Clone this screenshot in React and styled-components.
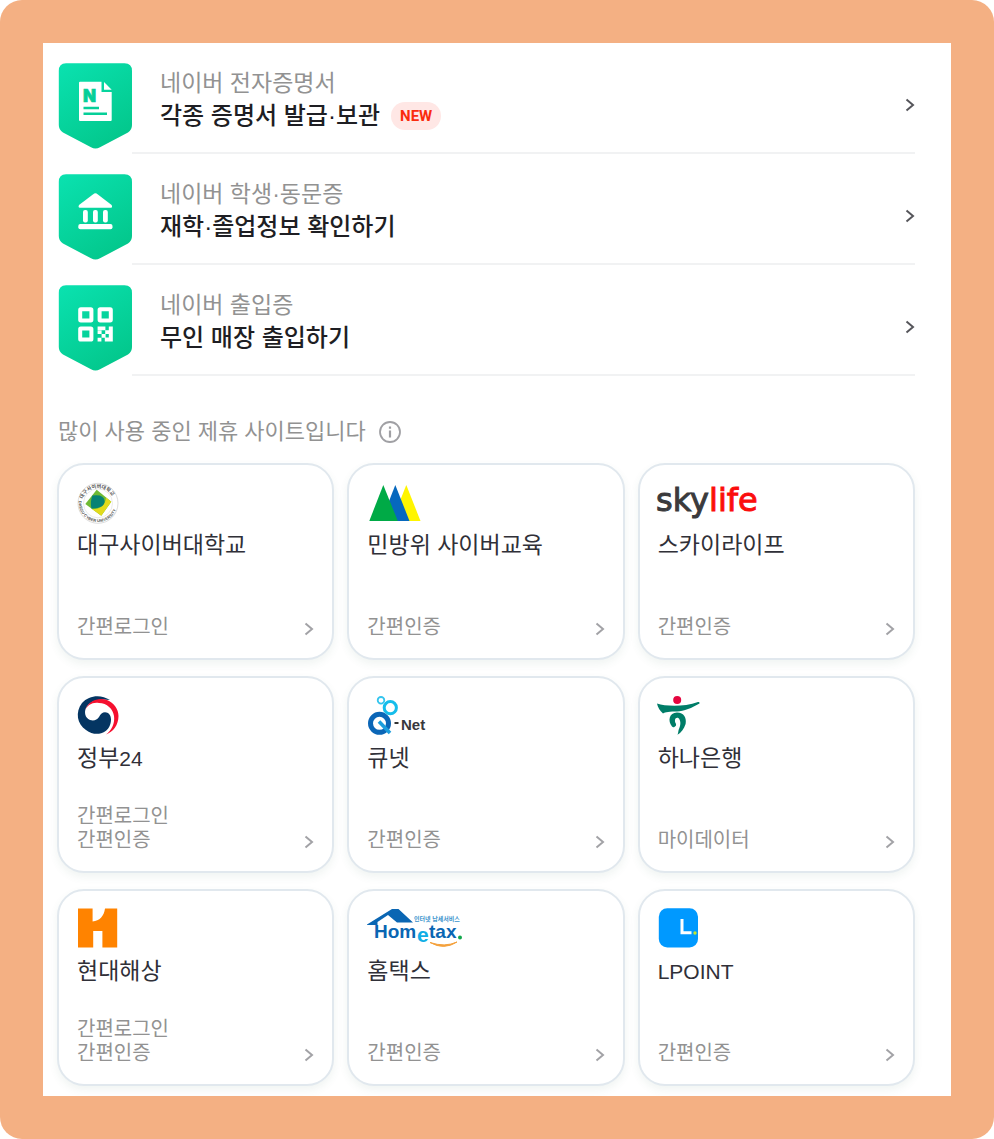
import styled, { createGlobalStyle } from "styled-components";

const GlobalStyle = createGlobalStyle`
  * {
    box-sizing: border-box;
  }

  body {
    margin: 0;
    background-color: #ffffff;
    font-family: "Liberation Sans", "Noto Sans CJK KR", sans-serif;
  }
`;

const Frame = styled.div`
  padding: 43px;
  border-radius: 22px;
  background-color: #f4b083;
`;

const Panel = styled.main`
  padding: 0 36px 10px 14px;
  background-color: white;
`;

const List = styled.ul`
  margin: 0;
  padding: 0;
  list-style: none;
`;

const ServiceLink = styled.a`
  display: flex;
  height: 111px;
  color: inherit;
  text-decoration: none;
`;

const Shield = styled.svg`
  flex: none;
  width: 75px;
  height: 87px;
  margin-top: 20px;
`;

const ServiceBody = styled.div`
  flex: 1;
  display: flex;
  justify-content: space-between;
  padding: 23px 0 0 28px;
  border-bottom: 2px solid #f1f2f3;
`;

const ServiceLabel = styled.div`
  font-size: 23px;
  line-height: 34px;
  color: #929292;
`;

const ServiceTitle = styled.div`
  display: flex;
  align-items: center;
  gap: 11px;
  font-size: 24px;
  line-height: 32px;
  font-weight: 500;
  color: #1e1e23;
`;

const NewBadge = styled.span`
  padding: 0 9px;
  border-radius: 14px;
  background-color: #ffe7e5;
  font-family: Roboto, sans-serif;
  font-size: 15px;
  line-height: 28px;
  font-weight: 700;
  color: #fa2c0e;
`;

const Arrow = styled.svg`
  flex: none;
  width: 10px;
  height: 14px;
  fill: none;
  stroke: ${(props) => props.color};
  stroke-width: 2;
`;

const ServiceArrow = styled(Arrow)`
  margin-top: 32px;
`;

const SectionHead = styled.div`
  display: flex;
  align-items: center;
  gap: 13px;
  padding: 39px 0 14px 1px;
`;

const SectionTitle = styled.h2`
  margin: 0;
  font-size: 22px;
  line-height: 34px;
  font-weight: 400;
  color: #929292;
`;

const InfoButton = styled.button`
  display: flex;
  padding: 0;
  border: none;
  background: none;
`;

const Grid = styled.ul`
  display: grid;
  grid-template-columns: repeat(3, 1fr);
  gap: 16px 13px;
  margin: 0;
  padding: 0;
  list-style: none;
`;

const Card = styled.a`
  display: flex;
  flex-direction: column;
  height: 197px;
  padding: 18px 18px 19px;
  border: 2px solid #e1e8ee;
  border-radius: 27px;
  background-color: white;
  box-shadow: 0 4px 8px rgba(60, 110, 90, 0.08);
  color: inherit;
  text-decoration: none;
`;

const Logo = styled.svg`
  display: block;
  width: 110px;
  height: 40px;
  overflow: visible;
`;

const SiteName = styled.strong`
  margin-top: 6px;
  font-size: 23px;
  line-height: 32px;
  font-weight: 400;
  color: #303038;
`;

const Latin = styled.span`
  font-size: 21px;
`;

const CardBottom = styled.div`
  display: flex;
  align-items: flex-end;
  justify-content: space-between;
  margin-top: auto;
`;

const Methods = styled.div`
  font-size: 20px;
  line-height: 24px;
  color: #929292;
`;

const CardArrow = styled(Arrow)`
  margin-bottom: 3px;
`;

const DocumentGlyph = () => (
  <>
    <path d="M23 18.7H44.5V29H54.7V57Q54.7 58 53.7 58H23Q22 58 22 57V19.7Q22 18.7 23 18.7Z" fill="white" />
    <path d="M47 19L54.7 26.8H47Z" fill="white" />
    <text
      x="26"
      y="39"
      fontFamily="Inter, sans-serif"
      fontSize="17"
      fontWeight="900"
      fill="#05cf98"
      stroke="#05cf98"
      strokeWidth="0.6"
    >
      N
    </text>
    <path d="M26.5 45H42M26.5 50.7H50" stroke="#05cf98" strokeWidth="2.4" />
  </>
);

const SchoolGlyph = () => (
  <g fill="white">
    <path d="M37.2 19.6Q38.4 18.8 39.6 19.6L54.6 31Q55.8 33.7 54 33.7H22.8Q20.8 33.7 22 31Z" />
    <rect x="26" y="36" width="4.8" height="12.4" rx="2" />
    <rect x="36" y="36" width="4.8" height="12.4" rx="2" />
    <rect x="46" y="36" width="4.8" height="12.4" rx="2" />
    <rect x="21.3" y="50" width="34.2" height="5.2" rx="2" />
  </g>
);

const QrGlyph = () => (
  <>
    <g fill="none" stroke="white" strokeWidth="4">
      <rect x="23.2" y="24.2" width="11.2" height="11.2" rx="0.6" />
      <rect x="42.6" y="24.2" width="11.2" height="11.2" rx="0.6" />
      <rect x="23.2" y="43.4" width="11.2" height="11.2" rx="0.6" />
    </g>
    <path
      d="M40.6 41.4H48.4V45.2H51.8V41.4H55.8V56.6H47.8V52.8H44.6V49H40.6V45.6H44.6V49H48.2V45.2H40.6ZM40.6 52.8H44.4V56.6H40.6ZM48.6 49V52.6H51.8V49Z"
      fill="white"
      fillRule="evenodd"
    />
  </>
);

const DaeguLogo = () => (
  <Logo viewBox="0 0 110 40" aria-hidden="true">
    <defs>
      <path id="ringTop" d="M5 21A16 16 0 0 1 37 21" />
      <path id="ringBottom" d="M2.2 16A19.2 19.2 0 1 0 39.8 16" />
    </defs>
    <circle cx="21" cy="20.3" r="20" fill="none" stroke="#c4c4c4" strokeWidth="0.6" />
    <circle cx="21" cy="20.3" r="14.5" fill="none" stroke="#dcdcdc" strokeWidth="0.6" />
    <g fill="#555" fontSize="5" fontWeight="700">
      <text>
        <textPath href="#ringTop" startOffset="5">대구사이버대학교</textPath>
      </text>
      <text fontSize="4">
        <textPath href="#ringBottom" startOffset="2">DAEGU CYBER UNIVERSITY</textPath>
      </text>
    </g>
    <path d="M19.7 6.7L34.3 18.7L24.3 32.7L8.3 21Z" fill="#6fba34" />
    <path d="M34.3 18.7L24.3 32.7L15 26Q28 26 29 14.4Z" fill="#e2da1c" />
    <path d="M15.4 12.5Q27 11 27.6 18Q27.5 25.5 14.4 25.4Q13 19 15.4 12.5Z" fill="#078274" />
  </Logo>
);

const CivilLogo = () => (
  <Logo viewBox="0 0 110 40" aria-hidden="true">
    <path d="M25 38L39.3 2L53.5 38Z" fill="#fff500" />
    <path d="M14.3 38L28.3 2L42.5 38Z" fill="#0668be" />
    <path d="M2.3 38L16.3 2L30.8 38Z" fill="#00aa46" />
  </Logo>
);

const SkylifeLogo = () => (
  <Logo viewBox="0 0 110 40" aria-hidden="true">
    <text
      x="-2"
      y="28"
      fontFamily="DejaVu Sans, sans-serif"
      fontSize="32"
      fill="#3a3a3c"
      stroke="#3a3a3c"
      strokeWidth="1"
    >
      sky
      <tspan fill="#fb0d0d" stroke="#fb0d0d">life</tspan>
    </text>
  </Logo>
);

const GovLogo = () => (
  <Logo viewBox="0 0 110 40" aria-hidden="true">
    <path
      d="M33 4C24 -2 12 -1 5 7C-2 16 0 28 9 34C18 41 30 38 33 29C35 24 34 19 31 17C27 15 24 17 22 21C20 24 17 25 13 24C8 22 7 16 9 12C12 5 22 2 33 4Z"
      fill="#043562"
    />
    <path
      d="M8 14C12 4 22 1 30 4C37 7 41.5 13 41.5 20C41.5 29 36 36 29 38.5C35 34 38 27 37 20C36 13 30 7 22 7C15 6 11 9 8 14Z"
      fill="#f5102f"
    />
  </Logo>
);

const QnetLogo = () => (
  <Logo viewBox="0 0 110 40" aria-hidden="true">
    <g fill="none">
      <circle cx="14" cy="4.3" r="3.3" stroke="#35c5ee" strokeWidth="1.8" />
      <circle cx="12.5" cy="27.3" r="9" stroke="#0b66b7" strokeWidth="5" />
      <circle cx="23.3" cy="11.7" r="6.1" stroke="#16bdeb" strokeWidth="3" />
      <path d="M12 25.5L23 37" stroke="#1b9ddd" strokeWidth="3.6" />
      <path d="M27.5 27H31.5" stroke="#333" strokeWidth="2" />
    </g>
    <text x="34" y="33.5" fontSize="15" fontWeight="700" fill="#38383c">
      Net
    </text>
  </Logo>
);

const HanaLogo = () => (
  <Logo viewBox="0 0 110 40" aria-hidden="true">
    <circle cx="19.2" cy="4" r="4" fill="#e5053f" />
    <path
      d="M-1 7.5C8 10.5 26 11 40 6Q42 5.5 41.5 7.5C34 12 26 15 19 15.5C12 15.5 7 16 5 17.5Q0 13 -1 7.5Z"
      fill="#007d68"
    />
    <path
      d="M14 30.5C9.5 25 11 16.5 19 16.5C26 16.5 28.8 22 27.6 28C26 33 23 37 19.5 38.8Q20 38 20.6 34C22 31 23.2 27 21.6 23.8C20.5 21 17.4 21.4 17 24C16.6 27 18.6 27 18 29.4C16.5 31.5 15 31.5 14 30.5Z"
      fill="#007d68"
    />
  </Logo>
);

const HyundaiLogo = () => (
  <Logo viewBox="0 0 110 40" aria-hidden="true">
    <path
      d="M1 -0.5H15.6V12.5C22.5 12 27 7 28 -0.5H40.2V38.5H25.4V22H16.2V38.5H1Z"
      fill="#ff8300"
    />
  </Logo>
);

const HometaxLogo = () => (
  <Logo viewBox="0 0 110 40" aria-hidden="true">
    <path d="M0 15.5L25 0H31.5L46 13.5H30L21 6L10.5 13V16H0Z" fill="#0a66b3" />
    <text x="47" y="12" fontSize="6" fontWeight="700" fill="#3a93cc">
      인터넷 납세서비스
    </text>
    <g fontSize="19" fontWeight="700" fill="#0a66b3">
      <text x="7" y="29">Hom</text>
      <text x="50" y="33" fontSize="21" fill="#10aee5">e</text>
      <text x="62" y="29">tax</text>
    </g>
    <circle cx="93" cy="28.5" r="2" fill="#12a84c" />
    <path d="M63 33.5Q77 41.5 90 33Q78 38.5 63 33.5Z" fill="#f4a13c" stroke="#f4a13c" />
  </Logo>
);

const LpointLogo = () => (
  <Logo viewBox="0 0 110 40" aria-hidden="true">
    <rect x="0.8" y="-0.7" width="39.2" height="39.2" rx="8.5" fill="#0099ff" />
    <path d="M24 10V23.8H33.5" fill="none" stroke="white" strokeWidth="3" />
    <circle cx="37" cy="24" r="1.7" fill="#c5e62c" />
  </Logo>
);

const services = [
  { label: "네이버 전자증명서", title: "각종 증명서 발급·보관", Glyph: DocumentGlyph, isNew: true },
  { label: "네이버 학생·동문증", title: "재학·졸업정보 확인하기", Glyph: SchoolGlyph },
  { label: "네이버 출입증", title: "무인 매장 출입하기", Glyph: QrGlyph },
];

const sites = [
  { name: "대구사이버대학교", SiteLogo: DaeguLogo, methods: ["간편로그인"] },
  { name: "민방위 사이버교육", SiteLogo: CivilLogo, methods: ["간편인증"] },
  { name: "스카이라이프", SiteLogo: SkylifeLogo, methods: ["간편인증"] },
  { name: "정부", latin: "24", SiteLogo: GovLogo, methods: ["간편로그인", "간편인증"] },
  { name: "큐넷", SiteLogo: QnetLogo, methods: ["간편인증"] },
  { name: "하나은행", SiteLogo: HanaLogo, methods: ["마이데이터"] },
  { name: "현대해상", SiteLogo: HyundaiLogo, methods: ["간편로그인", "간편인증"] },
  { name: "홈택스", SiteLogo: HometaxLogo, methods: ["간편인증"] },
  { name: "", latin: "LPOINT", SiteLogo: LpointLogo, methods: ["간편인증"] },
];

const ServiceItem = (props) => {
  const { label, title, Glyph, isNew } = props;
  return (
    <li>
      <ServiceLink href="#">
        <Shield viewBox="0 0 75 87" aria-hidden="true">
          <defs>
            <linearGradient id="shield" x1="0" y1="0" x2="0.6" y2="1">
              <stop offset="0" stopColor="#0ae2b0" />
              <stop offset="1" stopColor="#03c88d" />
            </linearGradient>
          </defs>
          <path
            d="M9 0.3H67.5Q75 0.3 75 8V62Q75 67 71 69.5L43 84.3Q38.4 86.8 34 84.3L6 69.5Q1.8 67 1.8 62V8Q1.8 0.3 9 0.3Z"
            fill="url(#shield)"
          />
          <Glyph />
        </Shield>
        <ServiceBody>
          <div>
            <ServiceLabel>{label}</ServiceLabel>
            <ServiceTitle>
              {title}
              {isNew && <NewBadge>NEW</NewBadge>}
            </ServiceTitle>
          </div>
          <ServiceArrow viewBox="0 0 10 14" color="#55555a" aria-hidden="true">
            <path d="M1.5 1.5L8 7L1.5 12.5" />
          </ServiceArrow>
        </ServiceBody>
      </ServiceLink>
    </li>
  );
};

const SiteCard = (props) => {
  const { name, latin, SiteLogo, methods } = props;
  return (
    <li>
      <Card href="#">
        <SiteLogo />
        <SiteName>
          {name}
          {latin && <Latin>{latin}</Latin>}
        </SiteName>
        <CardBottom>
          <Methods>
            {methods.map((method) => (
              <div key={method}>{method}</div>
            ))}
          </Methods>
          <CardArrow viewBox="0 0 10 14" color="#a2a2a6" aria-hidden="true">
            <path d="M1.5 1.5L8 7L1.5 12.5" />
          </CardArrow>
        </CardBottom>
      </Card>
    </li>
  );
};

const App = () => {
  return (
    <>
      <GlobalStyle />
      <Frame>
        <Panel>
          <List>
            {services.map((service) => (
              <ServiceItem key={service.label} {...service} />
            ))}
          </List>

          <SectionHead>
            <SectionTitle>많이 사용 중인 제휴 사이트입니다</SectionTitle>
            <InfoButton type="button" aria-label="안내">
              <svg width="22" height="22" viewBox="0 0 22 22" fill="none" stroke="#a0a0a4">
                <circle cx="11" cy="11" r="10" strokeWidth="1.8" />
                <path d="M11 9.5V16.5M11 5.5V7.8" strokeWidth="2.2" />
              </svg>
            </InfoButton>
          </SectionHead>

          <Grid>
            {sites.map((site) => (
              <SiteCard key={site.name + site.latin} {...site} />
            ))}
          </Grid>
        </Panel>
      </Frame>
    </>
  );
};

export default App;
